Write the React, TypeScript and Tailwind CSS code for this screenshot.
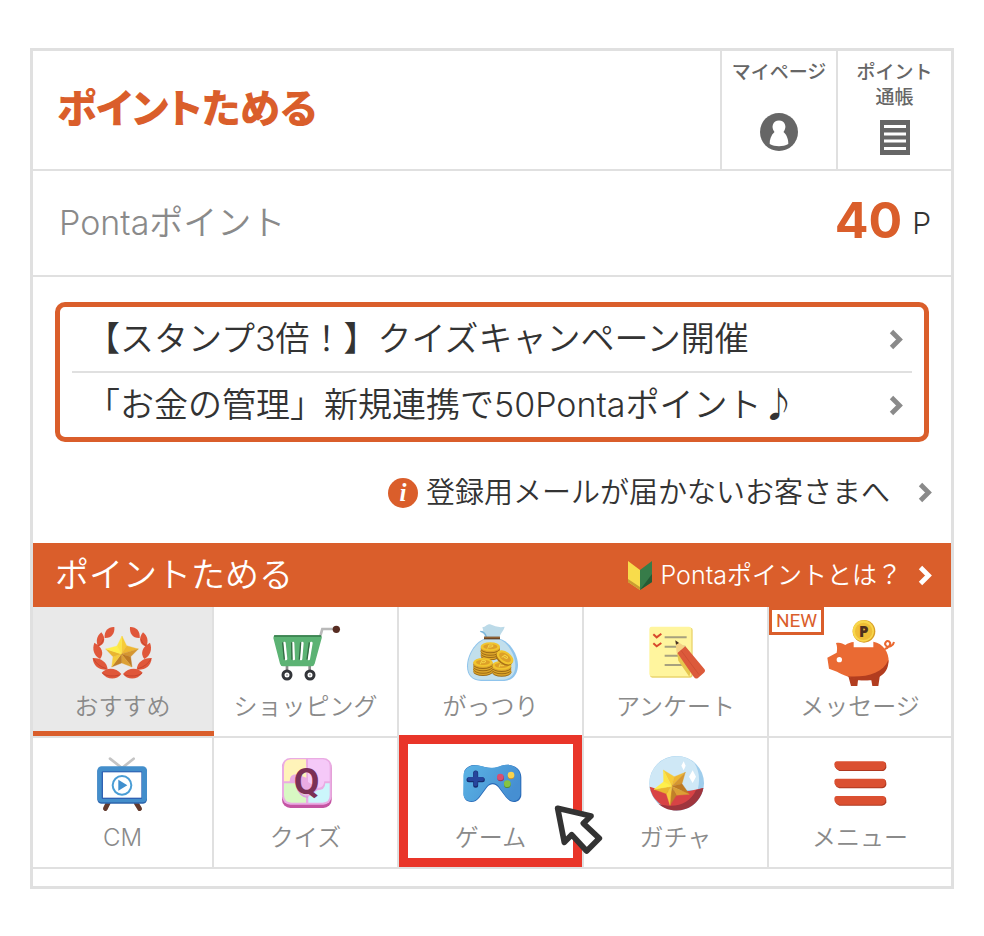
import React from 'react';

type IconProps = { viewBox: string; children: React.ReactNode };

type MenuItem = {
  label: string;
  icon: React.ReactNode;
  active?: boolean;
  isNew?: boolean;
  picked?: boolean;
};

const Icon: React.FC<IconProps> = ({ viewBox, children }) => (
  <svg viewBox={viewBox} width="80" height="72" aria-hidden="true">
    {children}
  </svg>
);

const Chevron: React.FC<{ className?: string }> = ({ className }) => (
  <svg viewBox="0 0 15 21" width="15" height="21" className={className} aria-hidden="true">
    <path d="M2.5 2.5 L10.5 10.5 L2.5 18.5" fill="none" stroke="currentColor" strokeWidth="4.8" />
  </svg>
);

// outer / inner points go clockwise from the top tip
const STAR_COLORS = [
  '#f6cb38', '#eeb732', '#d59630', '#bd7a24', '#dca035',
  '#c08029', '#f5cb3c', '#e9b530', '#fff04a', '#fde544',
];

const Star: React.FC<{ center: [number, number]; points: [number, number][] }> = ({ center, points }) => (
  <g>
    {points.map((p, i) => {
      const next = points[(i + 1) % points.length];
      const color = STAR_COLORS[i];
      return (
        <path
          key={i}
          d={`M${center.join(' ')} L${p.join(' ')} L${next.join(' ')} Z`}
          fill={color}
          stroke={color}
          strokeWidth="1"
        />
      );
    })}
  </g>
);

const LEAVES = [
  'M250 261 C232 260 219 272 221 294 C242 295 252 280 250 261 Z',
  'M211 277 C197 288 194 303 201 320 C221 316 226 294 211 277 Z',
  'M190 308 C183 328 188 346 207 357 C220 341 214 320 190 308 Z',
  'M185 354 C187 379 204 391 230 389 C229 367 209 353 185 354 Z',
  'M212 398 C228 380 256 383 271 402 C257 421 228 421 212 398 Z',
];

const WreathIcon = () => (
  <Icon viewBox="156 231 240 216">
    <g fill="#e0573a">
      {LEAVES.map((d) => (
        <path key={d} d={d} />
      ))}
      <g transform="translate(547 0) scale(-1 1)">
        {LEAVES.map((d) => (
          <path key={d} d={d} />
        ))}
      </g>
    </g>
    <g fill="none" stroke="#b93d28" strokeWidth="2">
      <path d="M188 356 Q198 378 226 386 M214 400 Q234 413 266 405 M202 317 Q214 312 217 298" />
      <path d="M360 356 Q349 378 321 386 M333 400 Q313 413 281 405 M346 317 Q333 312 330 298" />
    </g>
    <Star
      center={[271, 342]}
      points={[
        [273, 288], [287, 317], [322, 327], [299, 350], [303, 381],
        [272, 369], [242, 381], [246, 350], [224, 327], [258, 318],
      ]}
    />
  </Icon>
);

const CartIcon = () => (
  <Icon viewBox="706 231 240 216">
    <path d="M867 295 L875 267 H917" fill="none" stroke="#b9b9b9" strokeWidth="8" />
    <circle cx="917" cy="268" r="11" fill="#572c22" />
    <path d="M769 376 V392 M837 376 V392" stroke="#8d8d8d" strokeWidth="8" />
    <path d="M734 286 H867 Q875 287 873 295 L852 371 Q850 379 842 379 H758 Q750 379 748 371 L728 294 Q728 287 734 286 Z" fill="#5cb374" />
    <path d="M730 288 H871" stroke="#347849" strokeWidth="4" />
    <path d="M761 309 L766 357 M787 309 L789 357 M815 309 L811 357 M842 309 L834 357" stroke="#fff" strokeWidth="8" strokeLinecap="round" />
    <path d="M756 307 L761 359 M783 307 L784 359 M810 307 L806 359 M836 307 L829 359" stroke="#326b43" strokeWidth="4" fill="none" />
    <circle cx="769" cy="405" r="12" fill="#fff" stroke="#33353a" strokeWidth="9" />
    <circle cx="838" cy="405" r="12" fill="#fff" stroke="#33353a" strokeWidth="9" />
    <circle cx="769" cy="405" r="3" fill="#aaa" />
    <circle cx="838" cy="405" r="3" fill="#aaa" />
  </Icon>
);

const CoinPile: React.FC<{ x: number; y: number; layers: number }> = ({ x, y, layers }) => (
  <g>
    {Array.from({ length: layers }, (_, i) => layers - i).map((n) => (
      <g key={n}>
        <ellipse cx={x} cy={y + n * 7} rx="29" ry="13" fill="#9c6b16" />
        <ellipse cx={x} cy={y + n * 7 - 3} rx="29" ry="13" fill="#dda62b" />
      </g>
    ))}
    <ellipse cx={x} cy={y} rx="29" ry="13" fill="#f1c52e" />
    <ellipse cx={x} cy={y} rx="21" ry="8" fill="#dda028" />
    <path d={`M${x - 8} ${y + 6} L${x - 4} ${y - 5} H${x + 7} Q${x + 11} ${y} ${x + 2} ${y + 1} H${x - 4}`} fill="none" stroke="#f6d548" strokeWidth="3" />
  </g>
);

const BagIcon = () => (
  <Icon viewBox="180 51 240 216">
    <path d="M280 116 C252 126 228 164 228 199 C228 226 243 242 270 243 H340 C366 241 381 222 381 194 C380 160 355 124 326 116 Z" fill="#8fc4ec" />
    <path d="M281 118 C256 128 231 164 231 198 C231 224 244 239 270 239 H337 C360 238 374 220 373 194 C372 162 350 127 325 118 Z" fill="#c2dfec" />
    <path d="M281 111 C282 104 274 99 266 94 L277 92 L274 82 C284 81 286 73 297 73 C312 79 325 84 341 80 C338 93 327 101 326 111 Z" fill="#bcdae8" />
    <path d="M268 94 Q282 95 286 111" fill="none" stroke="#79b5dc" strokeWidth="4" />
    <path d="M279 114 H327" stroke="#6b4525" strokeWidth="8" />
    <path d="M279 112 H327" stroke="#b17c43" strokeWidth="2" />
    <CoinPile x={298} y={140} layers={4} />
    <CoinPile x={332} y={196} layers={3} />
    <CoinPile x={276} y={187} layers={4} />
    <g transform="rotate(35 342 172)">
      <ellipse cx="342" cy="177" rx="28" ry="17" fill="#a97217" />
      <ellipse cx="342" cy="172" rx="28" ry="17" fill="#f1c52e" />
      <ellipse cx="342" cy="172" rx="20" ry="11" fill="#dda028" />
      <path d="M334 178 L338 167 H348 Q352 172 343 173 H338" fill="none" stroke="#f6d548" strokeWidth="3" />
    </g>
  </Icon>
);

const SurveyIcon = () => (
  <Icon viewBox="165 51 240 216">
    <rect x="207" y="83" width="128" height="150" rx="7" fill="#ead46c" />
    <rect x="205" y="80" width="126" height="149" rx="7" fill="#fff59e" />
    <path d="M251 112 H317 M251 140 H313 M251 167 H310 M251 195 H315" stroke="#a7a17e" strokeWidth="6" />
    <path d="M217 103 L227 112 L241 101 M217 130 L227 139 L241 129" fill="none" stroke="#d84a2d" strokeWidth="6" />
    <path d="M288 158 L331 209 L325 230 L292 182 Z" fill="#e6c74e" />
    <path d="M283 121 L287 160 L313 140 Z" fill="#f4d284" />
    <path d="M283 121 L285 134 L294 129 Z" fill="#443025" />
    <path d="M289 159 L313 139 L370 207 Q375 213 368 219 L351 234 Q344 239 338 230 Z" fill="#dc5a3b" />
    <path d="M300 151 L354 224" stroke="#c94a30" strokeWidth="2" />
  </Icon>
);

const PigIcon = () => (
  <Icon viewBox="720 51 240 216">
    <path d="M804 225 L813 258 H832 L834 241 H874 L877 258 H895 L900 224 Z" fill="#b23d1f" />
    <path d="M914 147 C925 144 936 132 928 125 C920 119 911 130 918 137 C927 145 940 137 942 126" fill="none" stroke="#e9672f" strokeWidth="6" />
    <path d="M768 129 C780 126 788 130 796 135 C804 130 812 127 821 126 V142 H880 V125 C910 130 927 158 926 184 C923 214 890 233 855 238 C820 239 788 225 771 215 L747 206 L742 173 L770 158 C772 148 772 139 768 129 Z" fill="#ea6a33" />
    <path d="M925 180 C928 219 895 241 855 241 C832 242 812 234 802 229 C858 233 908 221 925 180 Z" fill="#b23d1f" />
    <circle cx="778" cy="179" r="8" fill="#fff" />
    <circle cx="852" cy="94" r="34" fill="#d99e26" />
    <circle cx="850" cy="93" r="32" fill="#f8d74c" />
    <circle cx="851" cy="94" r="26" fill="#efbd36" />
    <text x="851" y="110" textAnchor="middle" fontFamily="Open Sans, sans-serif" fontSize="45" fontWeight="800" fill="#50301d">P</text>
  </Icon>
);

const TvIcon = () => (
  <Icon viewBox="156 54 240 216">
    <path d="M237 86 L273 114 L308 86" fill="none" stroke="#c4c4c4" strokeWidth="8" strokeLinecap="round" />
    <path d="M232 218 L223 236 M315 218 L326 236" stroke="#633a2d" strokeWidth="14" strokeLinecap="round" />
    <rect x="199" y="112" width="149" height="109" rx="13" fill="#2c65ad" />
    <rect x="199" y="109" width="149" height="108" rx="13" fill="#438ecb" />
    <rect x="212" y="124" width="121" height="83" rx="3" fill="#2f61b3" />
    <rect x="216" y="127" width="115" height="76" fill="#fff" />
    <circle cx="273" cy="166" r="28" fill="#fff" stroke="#4a9dd5" strokeWidth="6" />
    <path d="M262 149 L289 166 L262 182 Z" fill="#408fce" />
  </Icon>
);

const QuizIcon = () => (
  <Icon viewBox="706 54 240 216">
    <rect x="754" y="89" width="149" height="145" rx="25" fill="#c455a3" />
    <rect x="754" y="84" width="149" height="140" rx="25" fill="#eaabe3" />
    <path d="M826 88 H781 Q760 89 760 111 V154 H777 Q777 132 798 133 L827 143 Z" fill="#fff3b9" />
    <path d="M832 88 H876 Q898 90 897 111 V154 H881 Q878 177 860 173 L832 156 Z" fill="#f5c9f8" />
    <path d="M760 160 H794 L800 183 L826 196 V218 H782 Q761 218 760 196 Z" fill="#d8f8c3" />
    <path d="M833 218 V200 L860 181 Q883 181 884 160 H897 V196 Q897 218 876 218 Z" fill="#cbf6fb" />
    <path d="M802 173 Q806 198 832 202" fill="none" stroke="#dca0df" strokeWidth="6" />
    <text x="828" y="192" textAnchor="middle" fontFamily="Roboto, sans-serif" fontSize="112" fontWeight="700" fill="#7b3055">Q</text>
  </Icon>
);

const GameIcon = () => (
  <Icon viewBox="180 54 240 216">
    <defs>
      <linearGradient id="pad" x1="0" y1="0" x2="1" y2="0.4">
        <stop offset="0" stopColor="#5bb4e5" />
        <stop offset="1" stopColor="#468fd2" />
      </linearGradient>
    </defs>
    <path d="M220 122 C228 108 244 103 259 106 C278 110 290 115 305 114 C322 114 331 104 350 104 C374 105 391 120 391 142 V194 C391 208 380 216 369 216 C357 215 350 208 344 201 L322 172 C312 160 299 159 289 171 L265 203 C258 211 251 216 241 216 C226 216 218 206 218 193 Z" fill="#2869b7" />
    <path d="M217 137 C218 116 238 103 259 106 C278 110 289 114 304 113 C321 112 331 104 350 104 C371 105 388 120 388 141 V193 C387 206 378 213 367 213 C357 212 350 206 344 198 L323 169 C312 156 299 156 288 168 L264 200 C257 209 250 214 240 214 C226 213 218 204 217 192 Z" fill="url(#pad)" />
    <path d="M254 129 V166 M234 149 H274" stroke="#172c70" strokeWidth="15" strokeLinecap="round" />
    <path d="M254 129 V163 M235 147 H273" stroke="#26459c" strokeWidth="12" strokeLinecap="round" />
    <circle cx="329" cy="144" r="10" fill="#97345f" />
    <circle cx="328" cy="141" r="10" fill="#d94f71" />
    <circle cx="360" cy="138" r="10" fill="#c68e35" />
    <circle cx="360" cy="135" r="10" fill="#f8d34d" />
    <circle cx="349" cy="164" r="10" fill="#548b39" />
    <circle cx="349" cy="161" r="10" fill="#86c441" />
  </Icon>
);

const CapsuleIcon = () => (
  <Icon viewBox="165 54 240 216">
    <circle cx="287" cy="160" r="82" fill="#9fcdec" />
    <path d="M205 160 A82 82 0 0 1 340 98 C356 124 357 150 350 180 H206 Z" fill="#cfe8f6" />
    <path d="M206 170 Q285 197 367 174 A82 82 0 0 1 206 170 Z" fill="#d84345" />
    <path d="M367 174 A82 82 0 0 1 232 221 C283 237 326 222 345 180 Z" fill="#9f353d" />
    <path d="M308 94 L314 107 L308 121 L301 107 Z M335 121 L345 140 L335 159 L324 140 Z" fill="#fff" />
    <Star
      center={[272, 169]}
      points={[
        [247, 120], [280, 140], [313, 127], [303, 161], [325, 193],
        [286, 196], [267, 226], [256, 191], [219, 178], [248, 155],
      ]}
    />
  </Icon>
);

const BarsIcon = () => (
  <Icon viewBox="720 54 240 216">
    {[94, 146, 198].map((y) => (
      <g key={y}>
        <path d={`M770 ${y + 3} H914 Q919 ${y + 4} 919 ${y + 13} V${y + 19} Q915 ${y + 29} 906 ${y + 29} H778 Q768 ${y + 26} 764 ${y + 15} Z`} fill="#ae3820" />
        <path d={`M770 ${y} H908 Q917 ${y} 917 ${y + 10} Q917 ${y + 25} 904 ${y + 26} H778 Q763 ${y + 22} 763 ${y + 9} Q763 ${y} 770 ${y} Z`} fill="#db5031" />
      </g>
    ))}
  </Icon>
);

const Pointer = () => (
  <svg viewBox="490 226 150 150" width="50" height="50" className="absolute top-[67px] -right-[22px] z-10" aria-hidden="true">
    <path d="M501 236 L601 259 L578 281 L626 326 L588 364 L543 315 L521 338 Z" fill="#fff" stroke="#333" strokeWidth="17" strokeLinejoin="round" />
  </svg>
);

const NOTICES = ['【スタンプ3倍！】クイズキャンペーン開催', '「お金の管理」新規連携で50Pontaポイント♪'];

const MENU: MenuItem[] = [
  { label: 'おすすめ', icon: <WreathIcon />, active: true },
  { label: 'ショッピング', icon: <CartIcon /> },
  { label: 'がっつり', icon: <BagIcon /> },
  { label: 'アンケート', icon: <SurveyIcon /> },
  { label: 'メッセージ', icon: <PigIcon />, isNew: true },
  { label: 'CM', icon: <TvIcon /> },
  { label: 'クイズ', icon: <QuizIcon /> },
  { label: 'ゲーム', icon: <GameIcon />, picked: true },
  { label: 'ガチャ', icon: <CapsuleIcon /> },
  { label: 'メニュー', icon: <BarsIcon /> },
];

const MenuCell: React.FC<{ item: MenuItem; last: boolean }> = ({ item, last }) => (
  <a
    href="#"
    className={`relative flex flex-col items-center border-b-2 border-[#e0e0e0] pt-2.5 pb-[13px] ${last ? '' : 'border-r-2'} ${
      item.active ? 'bg-[#e9e9e9]' : 'bg-white'
    }`}
  >
    {item.icon}
    <span className="mt-0.5 text-2xl leading-8 whitespace-nowrap text-[#8a8a8a]">{item.label}</span>
    {item.active && <span className="absolute -right-0.5 bottom-0 left-0 h-[5px] bg-[#da5e2b]" />}
    {item.isNew && (
      <span className="absolute top-0 left-0 border-3 border-[#da5e2b] bg-white px-1 font-[Roboto,sans-serif] text-[19px] leading-[22px] font-normal text-[#da5e2b]">
        NEW
      </span>
    )}
    {item.picked && (
      <>
        <span className="absolute inset-x-0 -top-[3px] bottom-0 border-9 border-[#e93529]" />
        <Pointer />
      </>
    )}
  </a>
);

const App: React.FC = () => {
  return (
    <div className="min-h-screen bg-white px-[30px] py-12 font-['Inter','Noto_Sans_CJK_JP',sans-serif] font-[350] text-[#333]">
      <main className="border-3 border-[#e0e0e0]">
        <header className="flex border-b-2 border-[#e0e0e0]">
          <h1 className="flex flex-1 items-center pb-2 pl-6 font-['Noto_Sans_CJK_JP',sans-serif] text-[40px] leading-none font-black text-[#da5e2b] [font-feature-settings:'palt']">
            ポイントためる
          </h1>
          <a href="#" className="flex w-[116px] flex-col items-center border-l-2 border-[#e0e0e0] pt-[9px] text-[19px] leading-[25px] font-medium text-[#666]">
            マイページ
            <svg viewBox="0 0 38 38" width="38" height="38" className="mt-7" aria-hidden="true">
              <circle cx="19" cy="19" r="19" fill="#666" />
              <path d="M14.500 19 C10.500 14 13 7.500 19 7.500 C25 7.500 27.500 14 23.500 19 C27 22 28.500 27 28.300 31 C23 34 15 34 9.700 31 C9.500 27 11 22 14.500 19 Z" fill="#fff" />
            </svg>
          </a>
          <a href="#" className="flex w-[115px] flex-col items-center border-l-2 border-[#e0e0e0] pt-[9px] pb-3.5 text-center text-[19px] leading-[25px] font-medium text-[#666]">
            ポイント
            <br />
            通帳
            <svg viewBox="0 0 30 35" width="30" height="35" className="mt-2.5" aria-hidden="true">
              <path d="M0 0 H30 V35 H0 Z" fill="#666" />
              <path d="M4 6.500 H26 M4 14 H26 M4 21 H26 M4 28.500 H26" stroke="#fff" strokeWidth="2.800" />
            </svg>
          </a>
        </header>

        <section className="flex items-center justify-between border-b-2 border-[#e0e0e0] py-5 pr-5 pl-[26px] leading-[64px]">
          <span className="text-[34px] text-[#8a8a8a]">Pontaポイント</span>
          <span className="flex items-center gap-2.5">
            <strong className="pb-1.5 text-[50px] leading-[58px] font-bold text-[#da5e2b]">40</strong>
            <span className="text-3xl leading-[64px]">P</span>
          </span>
        </section>

        <ul className="mx-[22px] mt-[25px] rounded-[10px] border-5 border-[#da5e2b] px-3">
          {NOTICES.map((text, i) => (
            <li key={text} className={i > 0 ? 'border-t-2 border-[#e0e0e0]' : ''}>
              <a href="#" className="flex items-center justify-between pr-2 pl-3.5 text-[34px] leading-[64px] whitespace-nowrap">
                {text}
                <Chevron className="text-[#8a8a8a]" />
              </a>
            </li>
          ))}
        </ul>

        <a href="#" className="flex items-center justify-end pr-[18px] text-[29px] leading-[101px] whitespace-nowrap">
          <span className="mr-2 flex size-[30px] items-center justify-center rounded-full bg-[#da5e2b] font-['Liberation_Serif',serif] text-[25px] leading-none font-bold text-white italic">
            i
          </span>
          登録用メールが届かないお客さまへ
          <Chevron className="ml-7 text-[#8a8a8a]" />
        </a>

        <div className="flex items-center justify-between bg-[#da5e2b] pr-[18px] pl-[22px] leading-[64px] text-white">
          <h2 className="text-[34px]">ポイントためる</h2>
          <a href="#" className="flex items-center text-[25px]">
            <svg viewBox="0 0 26 30" width="26" height="30" className="mr-2" aria-hidden="true">
              <path d="M1 1 L13 10 V30 L1 22 Z" fill="#f8dc4b" />
              <path d="M25 1 L13 10 V30 L25 22 Z" fill="#377c49" />
              <path d="M1 22 L13 30 V27 L1 19 Z" fill="#c99d32" />
              <path d="M13 30 L25 22 V14 Z" fill="#255b35" />
            </svg>
            Pontaポイントとは？
            <Chevron className="ml-4" />
          </a>
        </div>

        <nav className="grid grid-cols-[181fr_185fr_185fr_185fr_182fr] pb-[17px]">
          {MENU.map((item, i) => (
            <MenuCell key={item.label} item={item} last={i % 5 === 4} />
          ))}
        </nav>
      </main>
    </div>
  );
};

export default App;
